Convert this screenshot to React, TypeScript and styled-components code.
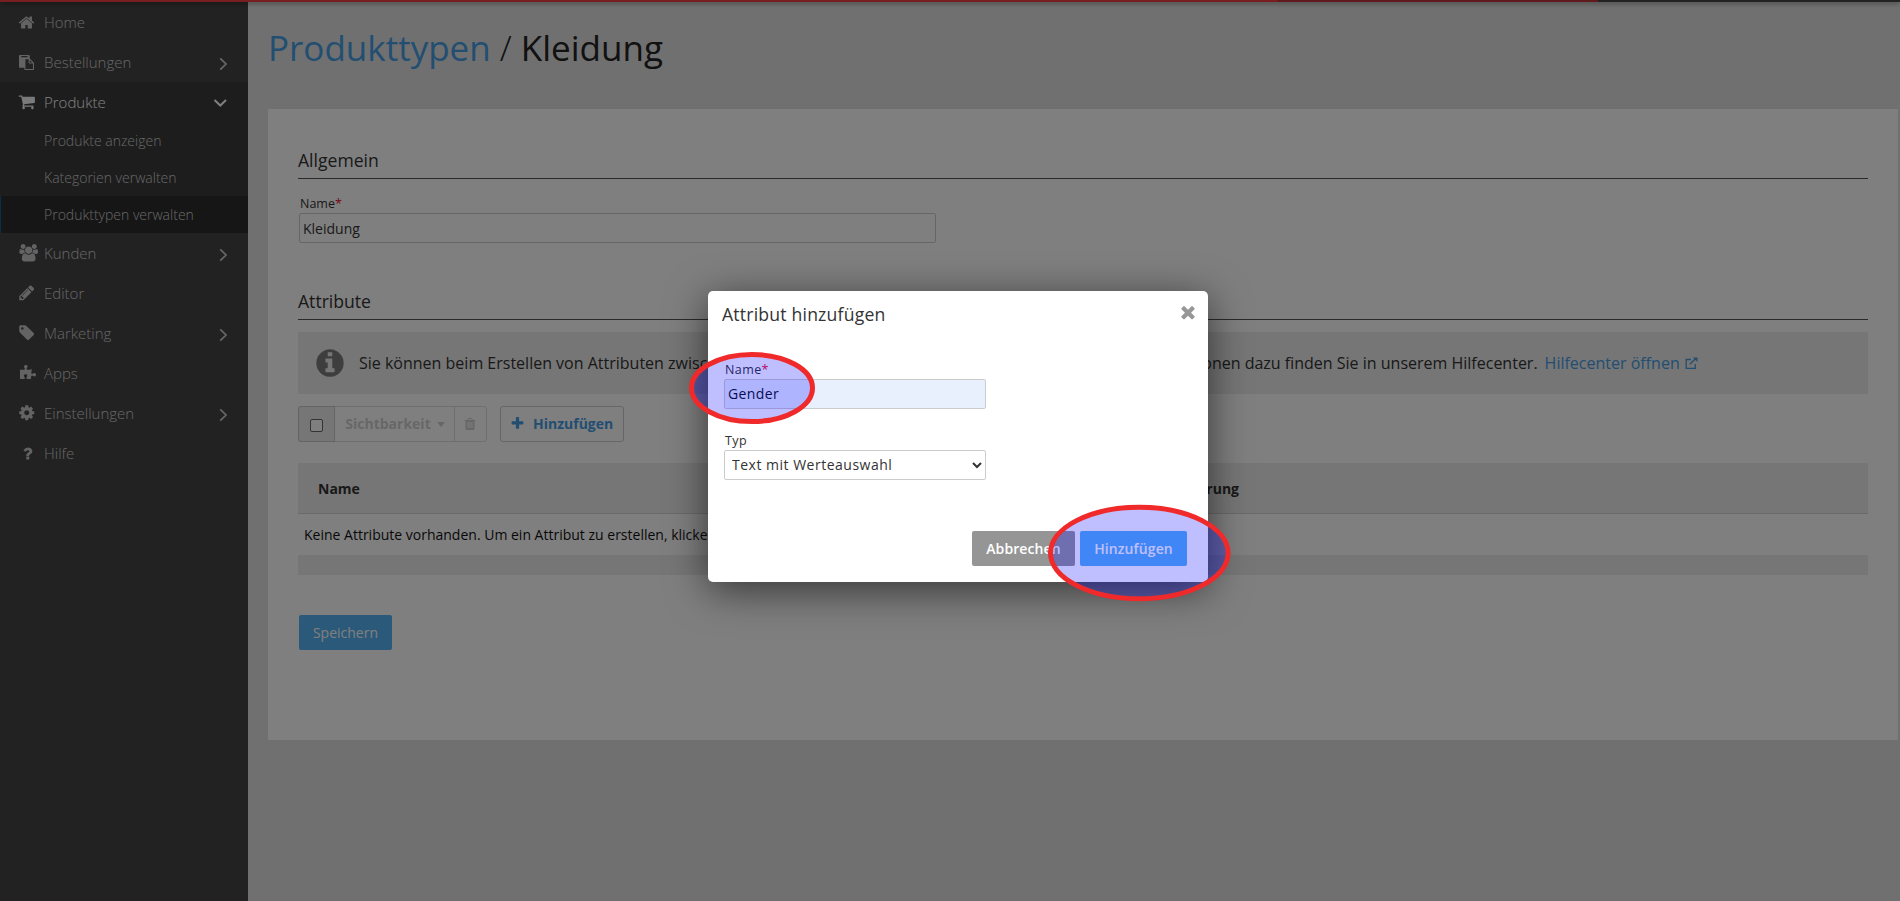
import React from "react";
import styled, { createGlobalStyle, css } from "styled-components";
import { FaPuzzlePiece } from "react-icons/fa";

const GlobalStyle = createGlobalStyle`
  *, *::before, *::after { box-sizing: border-box; }
  body {
    margin: 0;
    background: #e1e1e1;
    color: #333;
    font-family: "Open Sans", "Noto Sans", sans-serif;
    font-size: 14px;
    overflow: hidden;
  }
  button, input, select { font-family: inherit; font-size: inherit; color: inherit; letter-spacing: inherit; }
`;

/* ---------- icons ---------- */

const icons = {
  home: "M1472 992v480q0 26-19 45t-45 19h-384v-384h-256v384h-384q-26 0-45-19t-19-45v-480q0-1 .5-3t.5-3l575-474 575 474q1 2 1 6zm223-69l-62 74q-8 9-21 11h-3q-13 0-21-7l-692-577-692 577q-12 8-24 7-13-2-21-11l-62-74q-8-10-7-23.5t11-21.5l719-599q32-26 76-26t76 26l244 204v-195q0-14 9-23t23-9h192q14 0 23 9t9 23v408l219 182q10 8 11 21.5t-7 23.5z",
  paste: "M768 1664h896v-640h-416q-40 0-68-28t-28-68v-416h-384v1152zm256-1440v-64q0-13-9.5-22.5t-22.5-9.5h-704q-13 0-22.5 9.5t-9.5 22.5v64q0 13 9.5 22.5t22.5 9.5h704q13 0 22.5-9.5t9.5-22.5zm256 672h299l-299-299v299zm512 128v672q0 40-28 68t-68 28h-960q-40 0-68-28t-28-68v-160h-544q-40 0-68-28t-28-68v-1344q0-40 28-68t68-28h1088q40 0 68 28t28 68v328q21 13 36 28l408 408q28 28 48 76t20 88z",
  cart: "M704 1536q0 52-38 90t-90 38-90-38-38-90 38-90 90-38 90 38 38 90zm896 0q0 52-38 90t-90 38-90-38-38-90 38-90 90-38 90 38 38 90zm128-1088v512q0 24-16.5 42.5t-40.5 21.5l-1044 122q13 60 13 70 0 16-24 64h920q26 0 45 19t19 45-19 45-45 19h-1024q-26 0-45-19t-19-45q0-11 8-31.5t16-36 21.5-40 15.5-29.5l-177-823h-204q-26 0-45-19t-19-45 19-45 45-19h256q16 0 28.5 6.5t19.5 15.5 13 24.5 8 26 5.5 29.5 4.5 26h1201q26 0 45 19t19 45z",
  users: "M529 896q-162 5-265 128h-134q-82 0-138-40.5t-56-118.5q0-353 124-353 6 0 43.5 21t97.5 42.5 119 21.5q67 0 133-23-5 37-5 66 0 139 81 256zm1071 637q0 120-73 189.5t-194 69.5h-874q-121 0-194-69.5t-73-189.5q0-53 3.5-103.5t14-109 26.5-108.5 43-97.5 62-81 85.5-53.5 111.5-20q10 0 43 21.5t73 48 107 48 135 21.5 135-21.5 107-48 73-48 43-21.5q61 0 111.5 20t85.5 53.5 62 81 43 97.5 26.5 108.5 14 109 3.5 103.5zm-1024-1277q0 106-75 181t-181 75-181-75-75-181 75-181 181-75 181 75 75 181zm704 384q0 159-112.5 271.5t-271.5 112.5-271.5-112.5-112.5-271.5 112.5-271.5 271.5-112.5 271.5 112.5 112.5 271.5zm576 225q0 78-56 118.5t-138 40.5h-134q-103-123-265-128 81-117 81-256 0-29-5-66 66 23 133 23 59 0 119-21.5t97.5-42.5 43.5-21q124 0 124 353zm-128-609q0 106-75 181t-181 75-181-75-75-181 75-181 181-75 181 75 75 181z",
  pencil: "M491 1536l91-91-235-235-91 91v107h128v128h107zm523-928q0-22-22-22-10 0-17 7l-542 542q-7 7-7 17 0 22 22 22 10 0 17-7l542-542q7-7 7-17zm-54-192l416 416-832 832h-416v-416zm683 96q0 53-37 90l-166 166-416-416 166-165q36-38 90-38 53 0 91 38l235 234q37 39 37 91z",
  tag: "M576 448q0-53-37.5-90.5t-90.5-37.5-90.5 37.5-37.5 90.5 37.5 90.5 90.5 37.5 90.5-37.5 37.5-90.5zm1067 576q0 53-37 90l-491 492q-39 37-91 37-53 0-90-37l-715-716q-38-37-64.5-101t-26.5-117v-416q0-52 38-90t90-38h416q53 0 117 26.5t102 64.5l715 714q37 39 37 91z",
  cog: "M1152 896q0-106-75-181t-181-75-181 75-75 181 75 181 181 75 181-75 75-181zm512-109v222q0 12-8 23t-20 13l-185 28q-19 54-39 91 35 50 107 138 10 12 10 25t-9 23q-27 37-99 108t-94 71q-12 0-26-9l-138-108q-44 23-91 38-16 136-29 186-7 28-36 28h-222q-14 0-24.5-8.5t-11.5-21.5l-28-184q-49-16-90-37l-141 107q-10 9-25 9-14 0-25-11-126-114-165-168-7-10-7-23 0-12 8-23 15-21 51-66.5t54-70.5q-27-50-41-99l-183-27q-13-2-21-12.5t-8-23.5v-222q0-12 8-23t19-13l186-28q14-46 39-92-40-57-107-138-10-12-10-24 0-10 9-23 26-36 98.5-107.5t94.5-71.5q13 0 26 10l138 107q44-23 91-38 16-136 29-186 7-28 36-28h222q14 0 24.5 8.5t11.5 21.5l28 184q49 16 90 37l142-107q9-9 24-9 13 0 25 10 129 119 165 170 7 8 7 22 0 12-8 23-15 21-51 66.5t-54 70.5q26 50 41 98l183 28q13 2 21 12.5t8 23.5z",
  question: "M1088 1256v240q0 16-12 28t-28 12h-240q-16 0-28-12t-12-28v-240q0-16 12-28t28-12h240q16 0 28 12t12 28zm316-600q0 54-15.5 101t-35 76.5-55 59.5-57.5 43.5-61 35.5q-41 23-68.5 65t-27.5 67q0 17-12 32.5t-28 15.5h-240q-15 0-25.5-18.5t-10.5-37.5v-45q0-83 65-156.5t143-108.5q59-27 84-56t25-76q0-42-46.5-74t-107.5-32q-65 0-108 29-35 25-107 115-13 16-31 16-12 0-25-8l-164-125q-13-10-15.5-25t5.5-28q160-266 464-266 80 0 161 31t146 83 106 127.5 41 158.5z",
  info: "M1152 1376v-160q0-14-9-23t-23-9h-96v-512q0-14-9-23t-23-9h-320q-14 0-23 9t-9 23v160q0 14 9 23t23 9h96v320h-96q-14 0-23 9t-9 23v160q0 14 9 23t23 9h448q14 0 23-9t9-23zm-128-896v-160q0-14-9-23t-23-9h-192q-14 0-23 9t-9 23v160q0 14 9 23t23 9h192q14 0 23-9t9-23zm640 416q0 209-103 385.5t-279.5 279.5-385.5 103-385.5-103-279.5-279.5-103-385.5 103-385.5 279.5-279.5 385.5-103 385.5 103 279.5 279.5 103 385.5z",
  plus: "M1600 736v192q0 40-28 68t-68 28h-416v416q0 40-28 68t-68 28h-192q-40 0-68-28t-28-68v-416h-416q-40 0-68-28t-28-68v-192q0-40 28-68t68-28h416v-416q0-40 28-68t68-28h192q40 0 68 28t28 68v416h416q40 0 68 28t28 68z",
  times: "M1490 1322q0 40-28 68l-136 136q-28 28-68 28t-68-28l-294-294-294 294q-28 28-68 28t-68-28l-136-136q-28-28-28-68t28-68l294-294-294-294q-28-28-28-68t28-68l136-136q28-28 68-28t68 28l294 294 294-294q28-28 68-28t68 28l136 136q28 28 28 68t-28 68l-294 294 294 294q28 28 28 68z",
  trash: "M704 1376v-704q0-14-9-23t-23-9h-64q-14 0-23 9t-9 23v704q0 14 9 23t23 9h64q14 0 23-9t9-23zm256 0v-704q0-14-9-23t-23-9h-64q-14 0-23 9t-9 23v704q0 14 9 23t23 9h64q14 0 23-9t9-23zm256 0v-704q0-14-9-23t-23-9h-64q-14 0-23 9t-9 23v704q0 14 9 23t23 9h64q14 0 23-9t9-23zm-544-992h448l-48-117q-7-9-17-11h-317q-10 2-17 11zm928 32v64q0 14-9 23t-23 9h-96v948q0 83-47 143.5t-113 60.5h-832q-66 0-113-58.5t-47-141.5v-952h-96q-14 0-23-9t-9-23v-64q0-14 9-23t23-9h309l70-167q15-37 54-63t79-26h320q40 0 79 26t54 63l70 167h309q14 0 23 9t9 23z",
};
type IconName = keyof typeof icons;

const IconSvg = styled.svg`
  display: block;
  flex: none;
  overflow: visible;
  fill: currentColor;
`;

function Icon({ name, size = 16 }: { name: IconName; size?: number }) {
  return (
    <IconSvg width={size} height={size} viewBox="0 0 1792 1792">
      <path d={icons[name]} />
    </IconSvg>
  );
}

const StrokeSvg = styled.svg`
  display: block;
  flex: none;
  fill: none;
  stroke: currentColor;
`;

/* ---------- page frame ---------- */

const Page = styled.div`
  position: relative;
  display: flex;
  flex-direction: column;
  height: 901px;
  overflow: hidden;
`;

const TopBar = styled.div`
  position: relative;
  z-index: 1;
  display: flex;
  flex: none;
  height: 2px;
  background: #444;
  box-shadow: 0 1px 5px rgba(0, 0, 0, 0.6);
`;

const BarSegment = styled.div<{ $width: number; $color: string }>`
  width: ${(p) => p.$width}px;
  background: ${(p) => p.$color};
`;

const Body = styled.div`
  display: flex;
  flex: 1;
  min-height: 0;
`;

/* ---------- sidebar ---------- */

const Sidebar = styled.nav`
  flex: none;
  width: 248px;
  background: #444;
  color: #cdcdcd;
  font-weight: 300;
`;

const NavItem = styled.a<{ $open?: boolean }>`
  display: flex;
  align-items: center;
  height: 40px;
  padding: 0 21px 0 19px;
  font-size: 15px;
  line-height: 40px;
  ${(p) => p.$open && css`background: #3a3a3a; color: #fff;`}
`;

const NavIcon = styled.span<{ $shift: number }>`
  display: flex;
  width: ${(p) => 25 - p.$shift}px;
  margin-left: ${(p) => p.$shift}px;
  opacity: 0.95;
`;

const NavLabel = styled.span`
  flex: 1;
`;

const PuzzleIcon = styled(FaPuzzlePiece)`
  display: block;
  margin-top: -3px;
`;

const SubNav = styled.div`
  background: #3a3a3a;
`;

const SubItem = styled.a<{ $active?: boolean }>`
  display: block;
  height: 37px;
  padding-left: ${(p) => (p.$active ? 43 : 44)}px;
  font-size: 14px;
  line-height: 37px;
  ${(p) => p.$active && css`border-left: 1px solid #0f5f96; background: #2c2c2c;`}
`;

function Chevron({ open }: { open?: boolean }) {
  return open ? (
    <StrokeSvg width="14" height="10" viewBox="0 0 14 10" strokeWidth="2">
      <path d="M1.500 3 7.300 8.500 13 3" />
    </StrokeSvg>
  ) : (
    <StrokeSvg width="8" height="16" viewBox="0 0 8 16" strokeWidth="1.700">
      <path d="M1.200 4.300 7 10 1.200 15.700" />
    </StrokeSvg>
  );
}

type Entry = {
  icon: IconName | "puzzle";
  size: number;
  shift: number;
  label: string;
  arrow?: boolean;
  sub?: string[];
};
const entries: Entry[] = [
  { icon: "home", size: 17, shift: -0.6, label: "Home" },
  { icon: "paste", size: 15, shift: 0, label: "Bestellungen", arrow: true },
  {
    icon: "cart",
    size: 17.5,
    shift: -0.6,
    label: "Produkte",
    sub: ["Produkte anzeigen", "Kategorien verwalten", "Produkttypen verwalten"],
  },
  { icon: "users", size: 17.4, shift: 0.6, label: "Kunden", arrow: true },
  { icon: "pencil", size: 17.5, shift: -1.2, label: "Editor" },
  { icon: "tag", size: 17.5, shift: -1.2, label: "Marketing", arrow: true },
  { icon: "puzzle", size: 16, shift: 0.5, label: "Apps" },
  { icon: "cog", size: 17.5, shift: -1.2, label: "Einstellungen", arrow: true },
  { icon: "question", size: 17, shift: -0.5, label: "Hilfe" },
];

/* ---------- main content ---------- */

const Main = styled.main`
  flex: 1;
  min-width: 0;
  padding: 0 2px 0 20px;
`;

const PageTitle = styled.h1`
  margin: 0;
  height: 107px;
  padding-top: 21px;
  font-size: 35px;
  font-weight: 400;
  line-height: 50px;
  color: #222;
  white-space: pre;
`;

const TitleLink = styled.a`
  color: #459ce4;
`;

const Slash = styled.span`
  font-weight: 300;
`;

const Card = styled.section`
  display: flex;
  flex-direction: column;
  align-items: stretch;
  height: 631px;
  padding: 36px 30px 0;
  background: #fff;
`;

const SectionTitle = styled.h2<{ $top?: number }>`
  margin: ${(p) => p.$top ?? 0}px 0 0;
  height: 34px;
  border-bottom: 1px solid #555;
  font-size: 17.600px;
  font-weight: 400;
  line-height: 31px;
`;

const Label = styled.label`
  display: block;
  height: 20px;
  padding-left: 1px;
  font-size: 12.500px;
  line-height: 22px;
`;

const Star = styled.span`
  color: #f0142e;
`;

const TextInput = styled.input<{ $filled?: boolean }>`
  display: block;
  width: 100%;
  height: 30px;
  padding: 0 3px;
  border: 1px solid #ccc;
  border-radius: 2px;
  outline: none;
  background: ${(p) => (p.$filled ? "#e8f0fe" : "#fff")};
  color: ${(p) => (p.$filled ? "#111" : "#333")};
  ${(p) => p.$filled && css`padding-bottom: 2px;`}
`;

const NameField = styled.div`
  width: 637px;
  margin: 14px 0 0 1px;
`;

const InfoBox = styled.div`
  display: flex;
  align-items: center;
  height: 62px;
  margin-top: 12px;
  padding-left: 16px;
  background: #ececec;
  font-size: 16px;
  white-space: nowrap;
`;

const InfoIcon = styled.span`
  width: 45px;
  color: #7d7d7d;
`;

const InfoLead = styled.span`
  width: 774px;
  overflow: hidden;
`;

const HelpLink = styled.a`
  display: flex;
  align-items: center;
  gap: 5px;
  margin-left: 7px;
  color: #459ce4;
`;

const Toolbar = styled.div`
  display: flex;
  gap: 13px;
  height: 36px;
  margin-top: 12px;
  font-weight: 700;
`;

const ButtonGroup = styled.div`
  display: flex;
  border: 1px solid #ddd;
  border-radius: 3px;
  color: #cfcfcf;
`;

const CheckCell = styled.div`
  display: flex;
  align-items: center;
  justify-content: center;
  width: 37px;
  margin: -1px 0 -1px -1px;
  padding-top: 3px;
  border: 1px solid #c8c8c8;
  border-radius: 3px 0 0 3px;
  background: #ececec;
`;

const CheckBox = styled.span`
  width: 13px;
  height: 13px;
  border: 1px solid #666;
  border-radius: 2px;
  background: #fff;
`;

const GroupButton = styled.div<{ $width: number; $divided?: boolean }>`
  display: flex;
  align-items: center;
  justify-content: center;
  gap: 6px;
  width: ${(p) => p.$width}px;
  padding: 0 0 2px 1px;
  ${(p) => p.$divided && css`border-left: 1px solid #ddd; padding: 0 1px 0 0;`}
`;

const Caret = styled.span`
  width: 0;
  border: 4px solid transparent;
  border-top: 5px solid currentColor;
  border-bottom: 0;
  margin-top: 2px;
`;

const AddButton = styled.div`
  display: flex;
  align-items: center;
  width: 124px;
  padding: 0 0 2px 9px;
  gap: 8px;
  border: 1px solid #ccc;
  border-radius: 3px;
  color: #459ce4;
`;

const TableHead = styled.div`
  display: grid;
  grid-template-columns: 847px 1fr;
  height: 51px;
  margin-top: 21px;
  padding-left: 20px;
  border-bottom: 1px solid #d5d5d5;
  background: #ececec;
  font-weight: 700;
  line-height: 51px;
`;

const EmptyRow = styled.div`
  height: 41px;
  padding-left: 6px;
  color: #111;
  line-height: 42px;
`;

const TableFoot = styled.div`
  height: 20px;
  background: #ececec;
`;

const Button = styled.button<{ $width: number; $grey?: boolean; $strong?: boolean }>`
  width: ${(p) => p.$width}px;
  height: 35px;
  padding: 0;
  border: 0;
  border-radius: 2px;
  background: ${(p) => (p.$grey ? "#959595" : "#56b3f3")};
  color: #fff;
  font-weight: ${(p) => (p.$strong ? 600 : 400)};
  ${(p) => p.$strong && css`letter-spacing: 0.1px;`}
`;

const SaveRow = styled.div`
  margin: 40px 0 0 1px;
`;

/* ---------- dialog ---------- */

const Overlay = styled.div`
  position: absolute;
  inset: 0;
  z-index: 2;
  background: rgba(0, 0, 0, 0.5);
`;

const Dialog = styled.div`
  position: absolute;
  top: 291px;
  left: 708px;
  width: 500px;
  height: 291px;
  padding: 14px 21px 0 14px;
  border-radius: 5px;
  background: #fff;
  box-shadow: 0 8px 40px rgba(0, 0, 0, 0.58);
`;

const DialogHeader = styled.div`
  display: flex;
  justify-content: space-between;
  height: 54px;
  font-size: 17.600px;
  letter-spacing: 0.200px;
  line-height: 19px;
`;

const CloseIcon = styled.span`
  margin: -3px -11px 0 0;
  color: #979797;
`;

const DialogField = styled.div`
  width: 262px;
  height: 71px;
  margin-left: 2px;
  letter-spacing: 0.400px;
`;

const Select = styled.select`
  display: block;
  width: 100%;
  height: 30px;
  padding: 0 0 2px 3px;
  border: 1px solid #ccc;
  border-radius: 2px;
  background: #fff;
  letter-spacing: 0.500px;
`;

const DialogFooter = styled.div`
  display: flex;
  justify-content: flex-end;
  gap: 5px;
  margin-top: 30px;
`;

const Markers = styled.svg`
  position: absolute;
  inset: 0;
  z-index: 3;
  pointer-events: none;
`;

export default function App() {
  return (
    <>
      <GlobalStyle />
      <Page>
        <TopBar>
          <BarSegment $width={1278} $color="#f03c3c" />
          <BarSegment $width={320} $color="#c0323a" />
        </TopBar>
        <Body>
          <Sidebar>
            {entries.map((e) => (
              <React.Fragment key={e.label}>
                <NavItem $open={!!e.sub}>
                  <NavIcon $shift={e.shift}>
                    {e.icon === "puzzle" ? (
                      <PuzzleIcon size={e.size} />
                    ) : (
                      <Icon name={e.icon} size={e.size} />
                    )}
                  </NavIcon>
                  <NavLabel>{e.label}</NavLabel>
                  {(e.arrow || e.sub) && <Chevron open={!!e.sub} />}
                </NavItem>
                {e.sub && (
                  <SubNav>
                    {e.sub.map((s, i) => (
                      <SubItem key={s} $active={i === 2}>
                        {s}
                      </SubItem>
                    ))}
                  </SubNav>
                )}
              </React.Fragment>
            ))}
          </Sidebar>
          <Main>
            <PageTitle>
              <TitleLink>Produkttypen</TitleLink> <Slash>/</Slash> Kleidung
            </PageTitle>
            <Card>
              <SectionTitle>Allgemein</SectionTitle>
              <NameField>
                <Label>
                  Name<Star>*</Star>
                </Label>
                <TextInput defaultValue="Kleidung" />
              </NameField>
              <SectionTitle $top={43}>Attribute</SectionTitle>
              <InfoBox>
                <InfoIcon>
                  <Icon name="info" size={32} />
                </InfoIcon>
                <InfoLead>
                  Sie können beim Erstellen von Attributen zwischen verschiedenen Typen wählen.
                </InfoLead>
                <span>Informationen dazu finden Sie in unserem Hilfecenter.</span>
                <HelpLink>
                  Hilfecenter öffnen
                  <StrokeSvg width="13" height="12" viewBox="0 0 13 12" strokeWidth="1.300">
                    <path d="M6 2.500H1.200v8.800h9V7M4.800 7.300 10.500 1.700" />
                    <path d="M8 .5h4.500V5z" fill="currentColor" stroke="none" />
                  </StrokeSvg>
                </HelpLink>
              </InfoBox>
              <Toolbar>
                <ButtonGroup>
                  <CheckCell>
                    <CheckBox />
                  </CheckCell>
                  <GroupButton $width={119}>
                    Sichtbarkeit <Caret />
                  </GroupButton>
                  <GroupButton $width={32} $divided>
                    <Icon name="trash" size={14} />
                  </GroupButton>
                </ButtonGroup>
                <AddButton>
                  <Icon name="plus" size={15} />
                  Hinzufügen
                </AddButton>
              </Toolbar>
              <TableHead>
                <span>Name</span>
                <span>Sortierung</span>
              </TableHead>
              <EmptyRow>
                Keine Attribute vorhanden. Um ein Attribut zu erstellen, klicken Sie auf „Hinzufügen“.
              </EmptyRow>
              <TableFoot />
              <SaveRow>
                <Button $width={93}>Speichern</Button>
              </SaveRow>
            </Card>
          </Main>
        </Body>
        <Overlay>
          <Dialog>
            <DialogHeader>
              Attribut hinzufügen
              <CloseIcon>
                <Icon name="times" size={20} />
              </CloseIcon>
            </DialogHeader>
            <DialogField>
              <Label>
                Name<Star>*</Star>
              </Label>
              <TextInput $filled defaultValue="Gender" />
            </DialogField>
            <DialogField>
              <Label>Typ</Label>
              <Select>
                <option>Text mit Werteauswahl</option>
              </Select>
            </DialogField>
            <DialogFooter>
              <Button $grey $strong $width={103}>
                Abbrechen
              </Button>
              <Button $strong $width={107}>
                Hinzufügen
              </Button>
            </DialogFooter>
          </Dialog>
        </Overlay>
        <Markers width="1900" height="901" fill="rgba(0,0,255,0.25)" stroke="#f02a2a" strokeWidth="5">
          <ellipse cx="752" cy="388" rx="60.500" ry="33.500" />
          <ellipse cx="1139.300" cy="553" rx="88.800" ry="45.800" />
        </Markers>
      </Page>
    </>
  );
}
